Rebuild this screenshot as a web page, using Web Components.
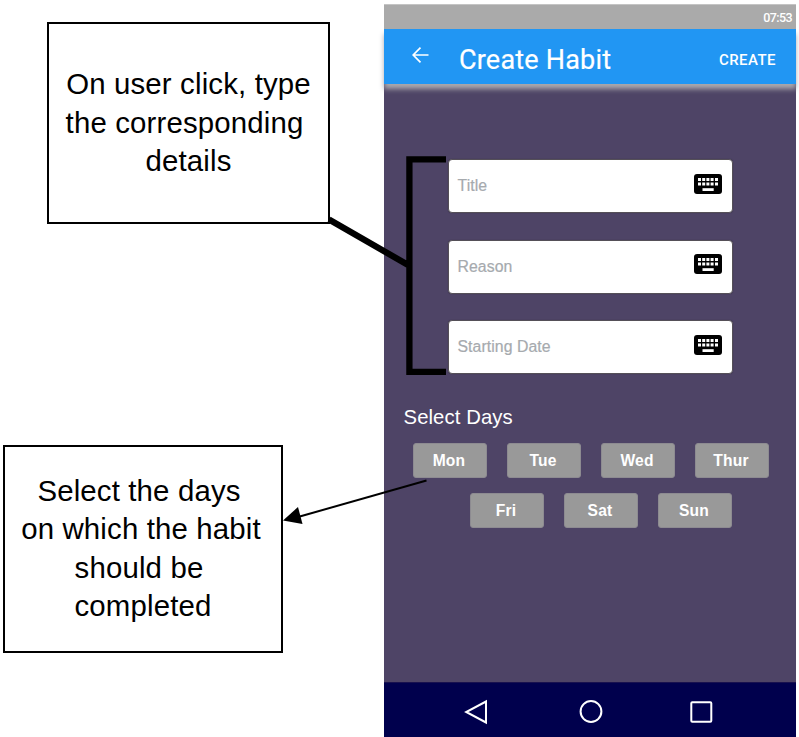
<!DOCTYPE html>
<html lang="en"><head><meta charset="utf-8"><title>Create Habit</title>
<style>html,body{margin:0;background:#fff;overflow:hidden}</style></head><body>
<habit-board></habit-board>
<script>
const define=(name,html)=>customElements.define(name,class extends HTMLElement{
  connectedCallback(){
    if(this.shadowRoot)return;
    const t=document.createElement('template');
    t.innerHTML='<style>*{box-sizing:border-box}</style>'+html;
    this.attachShadow({mode:'open'}).append(t.content.cloneNode(true));
  }
});
define('note-box',`<style>
:host{display:flex;flex-direction:column;justify-content:center;box-sizing:border-box;border:2px solid #000;background:#fff;text-align:center;white-space:nowrap;font:29.4px/38.4px "Liberation Sans",Arial,sans-serif;letter-spacing:.15px;color:#000}
</style><slot></slot>`);
define('status-bar',`<style>
:host{display:flex;box-sizing:border-box;height:25px;background:#aaa;border-top:1px solid #c4c4c4;justify-content:flex-end;align-items:center;padding:2px 4px 0 0;color:#fff;font:500 12.5px/16px Roboto,sans-serif;letter-spacing:-.6px}
</style><slot></slot>`);
define('app-bar',`<style>
:host{display:flex;box-sizing:border-box;height:55px;background:#2196f3;color:#fff;font-family:Roboto,sans-serif;align-items:center;padding:6px 20px 0 28px;box-shadow:0 5px 5px #aaa9ae;position:relative}
svg{display:block;margin-top:-10px;flex:none}
h1{font:400 27px/32px Roboto,sans-serif;margin:0 auto 0 29.5px;letter-spacing:.2px;-webkit-text-stroke:.2px #fff}
button{all:unset;font:500 15px/20px Roboto,sans-serif;letter-spacing:.45px}
</style><svg width="18" height="18" viewBox="0 0 18 18" fill="none" stroke="#fff" stroke-width="1.7"><path d="M16.500 9H1.500M8.500 1.700 1.200 9 8.500 16.300"/></svg>
<h1><slot></slot></h1><button><slot name="action"></slot></button>`);
define('keyboard-icon',`<style>:host{display:block;width:28px;height:20px}svg{display:block}</style>
<svg width="28" height="20" viewBox="0 0 28 20"><rect width="28" height="20" rx="3"/><g fill="#fff"><path d="M4 4h3v3H4zM8.2 4h3v3h-3zM12.4 4h3v3h-3zM16.6 4h3v3h-3zM21 4h3v3h-3zM4 8.4h3v3H4zM8.2 8.4h3v3h-3zM12.4 8.4h3v3h-3zM16.6 8.4h3v3h-3zM21 8.4h3v3h-3z"/><path d="M8.500 14.2h11.2V17H8.500z"/></g></svg>`);
define('habit-field',`<style>
:host{display:flex;box-sizing:border-box;height:54px;width:284.5px;background:#fff;border:1px solid #555058;border-radius:4px;align-items:center;justify-content:space-between;padding:0 10px 0 8.5px;color:#a6aaae;font:15.8px/20px "Liberation Sans",Arial,sans-serif;letter-spacing:.07px;-webkit-text-stroke:.2px #a6aaae;box-shadow:0 0 1px #2228}
keyboard-icon{margin-top:-5px}
</style><slot></slot><keyboard-icon></keyboard-icon>`);
define('day-button',`<style>
:host{display:flex;box-sizing:border-box;width:74px;height:35px;border-radius:3px;background:#999;border:1px solid #8d8b91;align-items:center;justify-content:center;padding:1px 2px 0 0;color:#fff;font:700 15.6px/20px "Liberation Sans",Arial,sans-serif;letter-spacing:.2px}
</style><slot></slot>`);
define('nav-bar',`<style>
:host{display:flex;box-sizing:border-box;height:55px;background:#00004d;border-top:1px solid #18114f;align-items:center;padding:3px 83px 0 80px;justify-content:space-between}
svg{display:block}.home{margin-left:4px}
</style>
<svg width="24" height="26" viewBox="0 0 24 26" fill="none" stroke="#fff" stroke-width="2"><path d="M22 2.5v21L2.2 13z"/></svg>
<svg class="home" width="24" height="24" viewBox="0 0 24 24" fill="none" stroke="#fff" stroke-width="2"><circle cx="12" cy="11.500" r="10.4"/></svg>
<svg width="23" height="22" viewBox="0 0 23 22" fill="none" stroke="#fff" stroke-width="2"><rect x="1.3" y="1.3" width="20" height="19.4" rx="1"/></svg>`);
define('phone-screen',`<style>
:host{display:flex;flex-direction:column;box-sizing:border-box;width:412.5px;height:733px;background:#4e4466}
main{flex:1;display:flex;flex-direction:column}
.fields{display:flex;flex-direction:column;gap:26.5px;margin:75px 0 0 64.5px}
h2{margin:30px 0 0 20px;font:20.3px/26px "Liberation Sans",Arial,sans-serif;letter-spacing:.1px;color:#fff}
.days{display:flex;gap:20px;margin:12.5px 0 0 29.5px}
.days+.days{margin:15px 0 0 86.5px}
</style>
<status-bar>07:53</status-bar>
<app-bar>Create Habit<span slot="action">CREATE</span></app-bar>
<main><div class="fields"><habit-field>Title</habit-field><habit-field>Reason</habit-field><habit-field>Starting Date</habit-field></div>
<h2>Select Days</h2>
<div class="days"><day-button>Mon</day-button><day-button>Tue</day-button><day-button>Wed</day-button><day-button>Thur</day-button></div>
<div class="days"><day-button>Fri</day-button><day-button>Sat</day-button><day-button>Sun</day-button></div></main>
<nav-bar></nav-bar>`);
define('connector-lines',`<style>:host{position:absolute;inset:0;pointer-events:none}svg{display:block}</style>
<svg width="799" height="737" viewBox="0 0 799 737" fill="none" stroke="#000"><path stroke-width="6.3" d="M446 159.3H409.4V371.9H446M329 219.5 409 265.5"/><path stroke-width="2" d="M426.5 480.5 298 517"/><path fill="#000" stroke="none" d="M283 520.5 298 507 302.500 524z"/></svg>`);
define('habit-board',`<style>
:host{display:flex;position:relative;width:799px;height:737px;background:#fff}
.notes{width:383.5px;flex:none}
.first{width:283px;height:202px;margin:22px 0 0 47px}
.second{width:280px;height:208px;margin:221px 0 0 3px;padding-bottom:1px}
.ls{padding-right:8px}.half{padding-right:4px}
phone-screen{margin-top:4px}
</style>
<div class="notes"><note-box class="first"><div>On user click, type</div><div class="ls">the corresponding</div><div>details</div></note-box>
<note-box class="second"><div class="ls">Select the days</div><div class="half">on which the habit</div><div class="ls">should be</div><div>completed</div></note-box></div>
<phone-screen></phone-screen><connector-lines></connector-lines>`);
</script></body></html>
